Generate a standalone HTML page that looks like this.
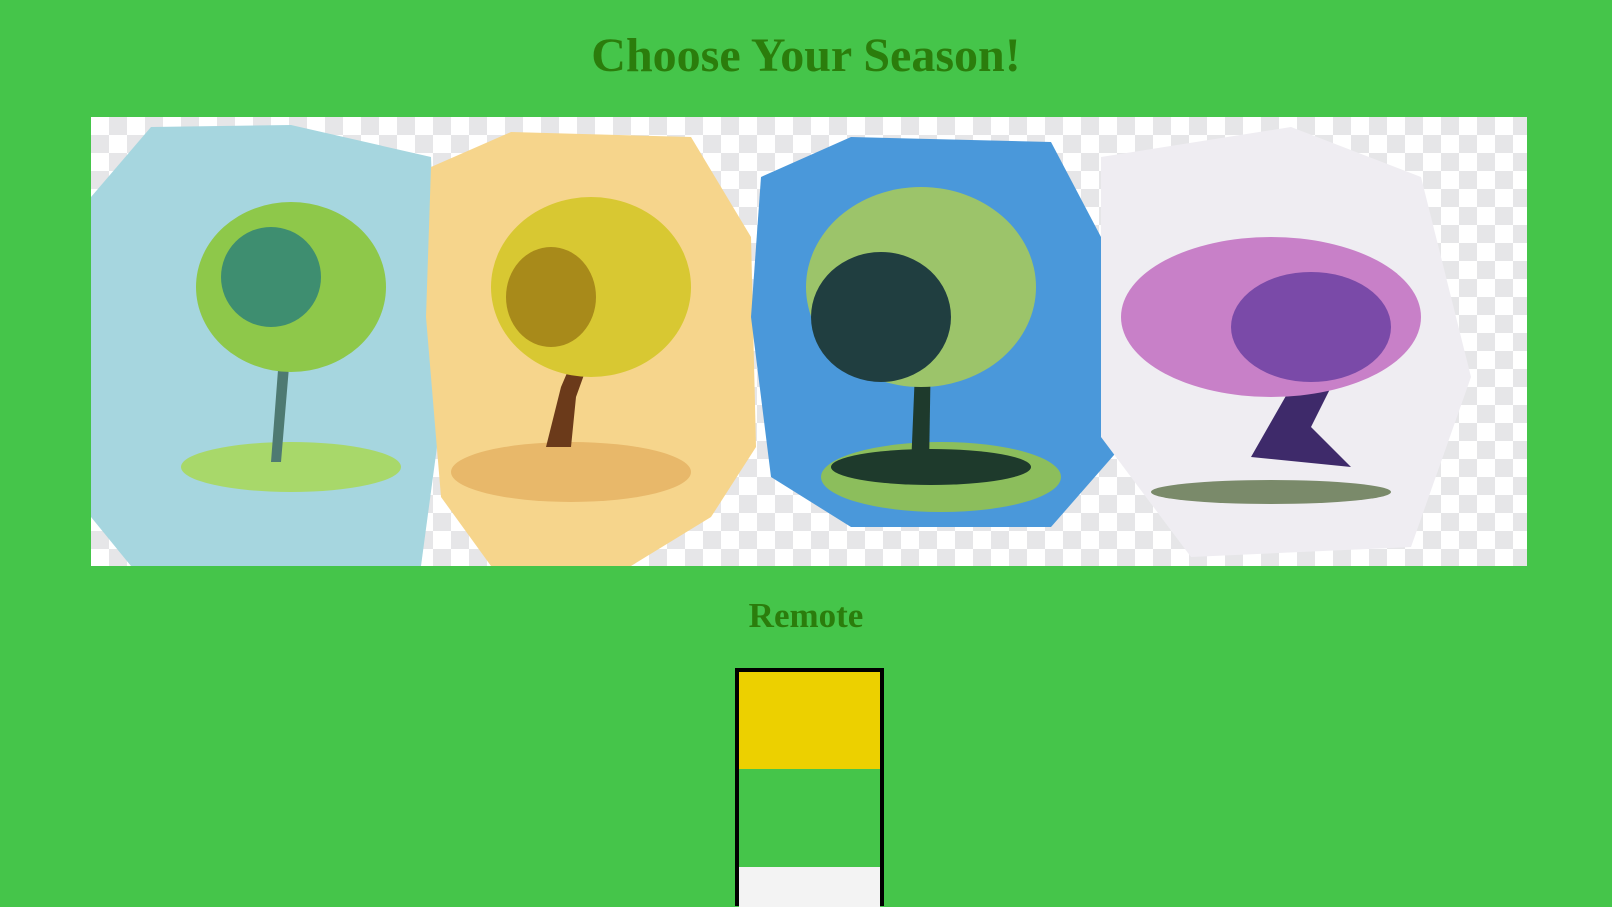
<!DOCTYPE html>
<html><head><style>
body{margin:0;background:#45c54a;width:1612px;height:888px;overflow:hidden;font-family:"Liberation Serif",serif;}
h1{position:absolute;left:0;width:1612px;top:26px;margin:0;text-align:center;font-size:48px;color:#2b7d0c;font-weight:bold;line-height:60px}
h2{position:absolute;left:0;width:1612px;top:596px;margin:0;text-align:center;font-size:35px;color:#2b7d0c;font-weight:bold;line-height:40px}
.img{position:absolute;left:91px;top:117px;width:1436px;height:449px;
background-color:#fff;background-image:linear-gradient(45deg,#e6e6e8 25%,transparent 25%,transparent 75%,#e6e6e8 75%),linear-gradient(45deg,#e6e6e8 25%,transparent 25%,transparent 75%,#e6e6e8 75%);background-size:36px 36px;background-position:0 0,18px 18px;overflow:hidden}
.box{position:absolute;left:735px;top:668px;width:141px;height:230px;border:4px solid #000;background:#45c54a}
</style></head><body>
<h1>Choose Your Season!</h1>
<div class="img">
<svg width="1436" height="449" viewBox="0 0 1436 449">
<path d="M0 80 L60 10 L200 8 L340 40 L350 300 L330 449 L40 449 L0 400Z" fill="#a6d6df"/>
<path d="M340 50 L420 15 L600 20 L660 120 L665 330 L620 400 L540 449 L400 449 L350 380 L335 200Z" fill="#f6d58c"/>
<path d="M670 60 L760 20 L960 25 L1010 120 L1030 330 L960 410 L760 410 L680 360 L660 200Z" fill="#4a98da"/>
<path d="M1010 40 L1200 10 L1330 60 L1380 260 L1320 430 L1100 440 L1010 320Z" fill="#efedf2"/>
<ellipse cx="200" cy="350" rx="110" ry="25" fill="#a8d86a"/>
<path d="M180 345 L188 240 L200 180 L206 180 L198 250 L190 345Z" fill="#4e7a72"/>
<ellipse cx="200" cy="170" rx="95" ry="85" fill="#8ec84a"/>
<ellipse cx="180" cy="160" rx="50" ry="50" fill="#3e8e70"/>
<ellipse cx="480" cy="355" rx="120" ry="30" fill="#e8b86a"/>
<path d="M455 330 L470 270 L500 200 L512 205 L485 280 L480 330Z" fill="#6b3a1a"/>
<ellipse cx="500" cy="170" rx="100" ry="90" fill="#d8c832"/>
<ellipse cx="460" cy="180" rx="45" ry="50" fill="#a88a1a"/>
<ellipse cx="850" cy="360" rx="120" ry="35" fill="#8cbe5c"/>
<ellipse cx="840" cy="350" rx="100" ry="18" fill="#1e3a2c"/>
<path d="M820 350 L825 230 L840 230 L838 350Z" fill="#1e3a2c"/>
<ellipse cx="830" cy="170" rx="115" ry="100" fill="#9cc46a"/>
<ellipse cx="790" cy="200" rx="70" ry="65" fill="#203e40"/>
<ellipse cx="1180" cy="375" rx="120" ry="12" fill="#7a8a6a"/>
<path d="M1160 340 L1200 270 L1240 270 L1220 310 L1260 350Z" fill="#3e2a6a"/>
<ellipse cx="1180" cy="200" rx="150" ry="80" fill="#c880c8"/>
<ellipse cx="1220" cy="210" rx="80" ry="55" fill="#7a4aa8"/>
</svg>
</div>
<h2>Remote</h2>
<div class="box">
<div style="height:97px;background:#ecd000"></div>
<div style="height:98px;background:#45c54a"></div>
<div style="height:40px;background:#f3f3f3"></div>
</div>
</body></html>
